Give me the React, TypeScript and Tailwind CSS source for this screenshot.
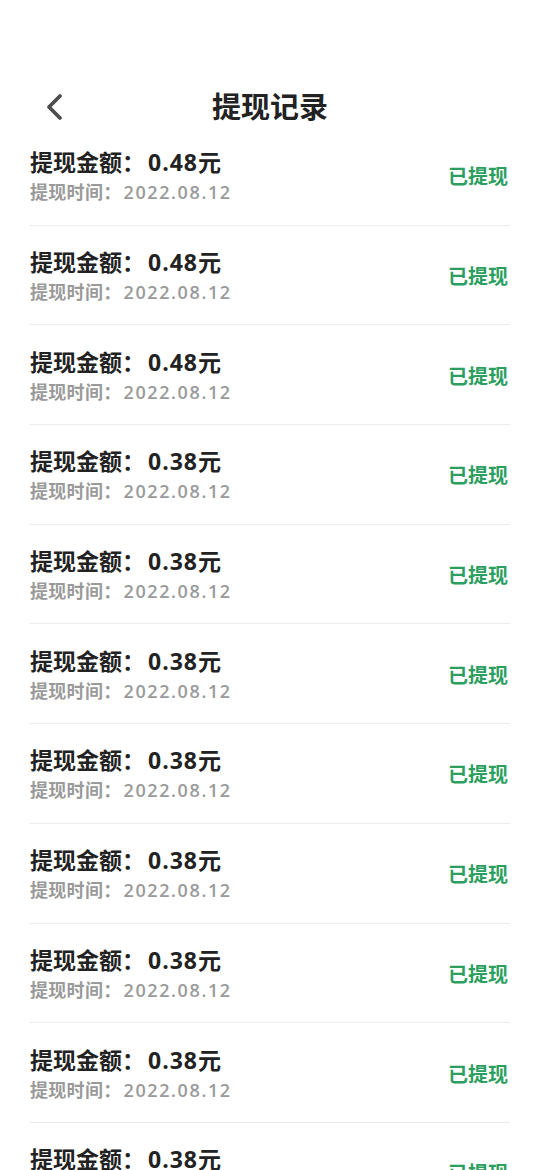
import React from 'react';

const records = [
  '0.48', '0.48', '0.48', '0.38', '0.38', '0.38', '0.38', '0.38', '0.38', '0.38', '0.38',
];

export default function App() {
  return (
    <div
      className="w-[540px] h-[1170px] overflow-hidden bg-white"
      style={{ fontFamily: '"Open Sans", "Noto Sans CJK SC", sans-serif' }}
    >
      {/* 顶部 */}
      <div className="h-[88px]" />
      <div className="relative h-[38px] flex items-center justify-center">
        <button className="absolute left-[40px] top-[4px] w-[28px] h-[30px] flex items-center justify-center">
          <svg width="22" height="28" viewBox="0 0 22 28" fill="none">
            <path d="M17 3 L6 14 L17 25" stroke="#4d4d4d" strokeWidth="3.8" strokeLinecap="round" strokeLinejoin="round" />
          </svg>
        </button>
        <h1 className="text-[29px] leading-[38px] font-bold text-[#222]">提现记录</h1>
      </div>

      {/* 列表 */}
      <div className="px-[30px]">
        {records.map((amt, i) => (
          <div key={i} className="h-[99.7px] flex items-center justify-between border-b border-[#ececec]">
            <div className="pt-[4px]">
              <p className="text-[23px] leading-[30px] font-bold text-[#222]">
                提现金额：<span className="tracking-[1px] ml-[3px]">{amt}</span>元
              </p>
              <p className="text-[18px] leading-[30px] font-semibold text-[#9a9a9a] tracking-[0.3px]">
                提现时间：<span className="tracking-[1.6px] ml-[2px]">2022.08.12</span>
              </p>
            </div>
            <span className="text-[20px] font-bold text-[#2c9e5f] mr-[2px] mt-[4px]">已提现</span>
          </div>
        ))}
      </div>
    </div>
  );
}
